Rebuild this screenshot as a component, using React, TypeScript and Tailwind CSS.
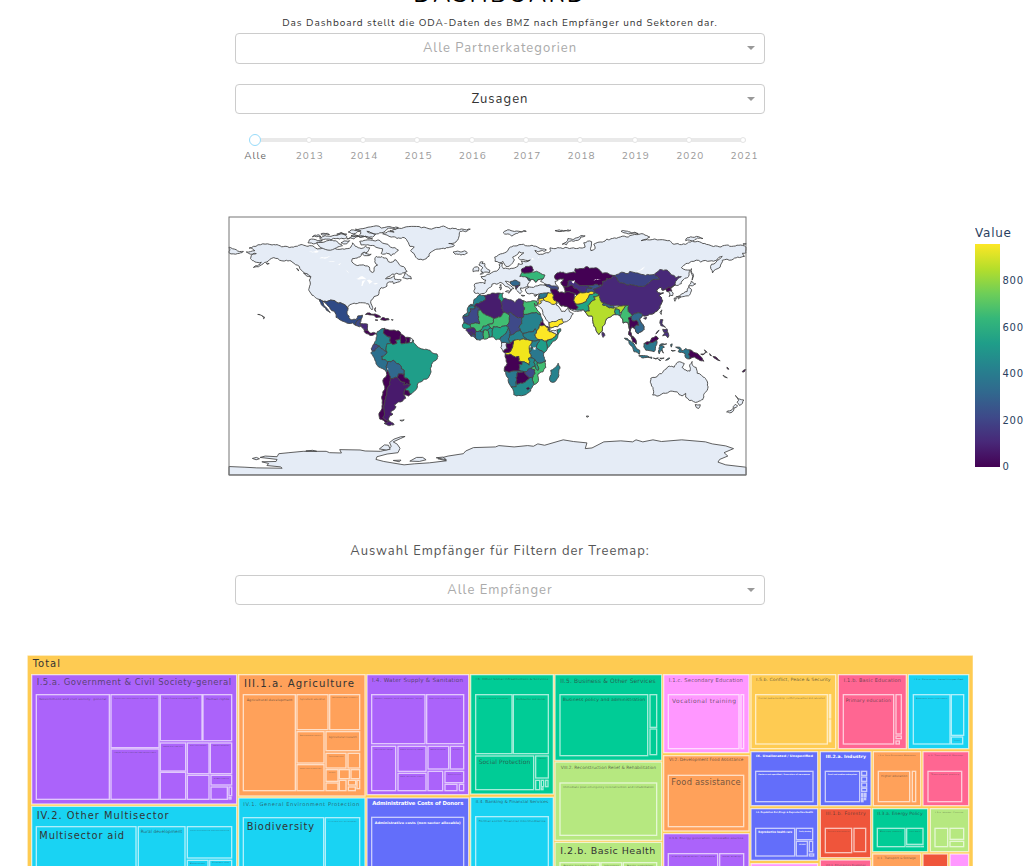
import React from "react";

type Shape = [fill: string, points: string];

const LAND = "#e5ecf6";

/* Outlines as "lon lat" pairs separated by commas. */
const BASE: string[] = [
  // North America
  "-168 65.6,-162 66.5,-166 68.3,-163 69.5,-156.5 71.3,-150 70.5,-141 69.6,-135 69,-128 70.3,-124 70,-115 68.5,-108 68,-101 67.8,-96 68.2,-94 72,-92 69.5,-88 68,-85 69.5,-82 68.5,-83 66.4,-87 65,-94 61,-94.5 58.8,-92.5 57,-88 56.5,-82.3 55.1,-82 53,-80 51.3,-79 52,-79 54.5,-76.5 56.5,-78.5 58.8,-77.5 62.5,-73.5 62.4,-70 61,-69 58.8,-66 58.7,-64.5 60.3,-61.5 56.8,-57.5 54.5,-56 52,-60 50.2,-66.4 50.2,-71 46.8,-65 49.2,-64.5 46.5,-60 46,-65.5 43.5,-66 45,-70 43.7,-70 41.8,-74 40.7,-75.5 38,-76 35.5,-81 32,-81.3 30,-80 27,-80.4 25.2,-82 27,-83 29.5,-85 30,-89.5 30.2,-94 29.5,-97.3 27.5,-97.2 25.9,-101 29.5,-106.5 31.7,-117.1 32.5,-120.6 34.6,-124.2 40.3,-124 46,-123 48.5,-127.5 51,-131 55.5,-136 58.5,-140 59.8,-146 61,-151.5 60.5,-154 58.5,-158.5 56,-163 54.8,-160 56,-157.5 58.5,-162 58.7,-165 61,-164.5 63.2,-161 64.5,-166.3 64.6",
  // Eurasia and Arabia
  "-9 43.2,-1.8 43.4,-1.2 46,-4.5 48.4,-1.6 48.7,1.5 50.2,4 51.8,8 53.8,8.1 57,10.6 57.7,10 55.5,11 54,14 54,19 54.5,21 55.5,21.5 57.5,24.4 57.2,23.5 59.2,29.8 60,23 60,21.4 61.5,25.3 65,22 65.8,17.5 62,18.8 60,16.5 57,14.2 55.4,12.8 55.6,10.8 59,8 58.1,5.3 59,5 62,10.5 64.5,15 68.3,19 69.8,25 71,31 70.3,41 67,40 66.2,33 66.7,35 64.3,37 64,40 64.8,44 66.5,43.5 68.5,46 68,54 68.8,60 68.5,68 69,67 72,72.5 72.8,72 66.5,75 68,74 71,80 72.5,87 75,98 76,104 77.7,113 76,107 73.5,113 74,127 73.5,130 71,140 72.5,150 71.5,160 69.7,170 69.5,180 69,180 65,177.5 64.7,179 62.5,170 60,163.5 59.8,163 57.8,162 55,156.7 51,156 57,161.5 60.5,163.5 62.5,155 59.3,142 59,135 54.7,141 53,140 48.5,135 43.5,130.7 42.5,127.5 39.8,129.3 37,129 35.2,126.4 34.5,126.8 37,124 39.9,121.5 39,121 40.8,117.8 39,119 37.2,122.5 37,119.5 35,121.9 31.8,120 26.5,116 22.8,110 21,108 21.6,105.8 19,109 13.4,109 11.6,105 8.7,102.5 12.3,100.5 13.4,99.3 10,103.4 4,103.5 1.3,100.5 5,98.3 8,98.8 12,97.5 16.5,94.4 16,94 19,91.5 22.5,87 21.5,82 16.6,80 13.5,79.8 10.3,77.5 8,73.5 16,72.7 21,70 21,68 23.7,66.5 25.4,57.3 25.8,56 27.1,51.5 27.9,50 30.1,48 29.9,48 28.5,50.2 26.6,51.2 25,51.6 24.1,54 24.1,56.3 26.3,57 24,59.8 22.5,57.7 19,55 17,52 15.6,45 12.8,43.4 12.6,42.8 16.4,39 21.5,35 28,34.9 29.5,34.3 31.2,36 35,36 36.7,32.5 36.1,30.5 36.7,27.5 36.8,26.3 39,27 40.4,29 41.2,35 42,41.5 41.5,39 44.2,37 45,39 47.2,35 46.3,33.5 44.5,32.5 46,30.5 46.5,28.7 44,27.8 42.6,28.5 41.2,26 40.8,23 40.5,24 38,22.8 36.5,21.5 37.5,19.4 41,19.5 42,13.7 45.1,12.4 45.2,13.6 43.6,18.4 40.1,16.8 39.8,15.8 38,16.2 39.5,12.5 41.5,10.2 43.9,8.8 44.4,6.5 43.1,3.1 43.1,3 41.8,-0.3 39.3,-0.7 37.8,-2.2 36.7,-5.6 36,-6.5 37,-8.9 37,-9.4 38.8,-8.8 41",
  // Greenland, Iceland, Great Britain, Ireland
  "-73 78.3,-67 76,-59 75.8,-55 72,-54 69.5,-51 69,-53.5 66.5,-50 62,-45 60,-42.5 61,-40 65,-32 68,-23 70.2,-27 71.5,-22 72.5,-20 76,-19 80,-12 81.5,-22 82,-32 83.4,-46 82.5,-60 82,-68 80.5,-65 79.5",
  "-24 65.5,-20 66,-16 66.4,-14 65,-18.5 63.5,-22.5 64",
  "-5 50,1.4 51.2,1.6 52.8,0 53.5,-2 55.8,-2 57.6,-4 57.7,-3 58.6,-5 58.6,-6 56.5,-3.2 54.5,-4.5 53.3,-4.5 52,-3 51.4",
  "-10 51.8,-6.3 52.2,-6 54.5,-8 55.2,-10 54",
  // Arctic Canada
  "-90 76.5,-80 76,-78 78,-84 80,-75 79,-70 81.5,-62 82.5,-70 83.1,-85 82.3,-92 81.5,-88 79",
  "-80 73.7,-72 71.5,-67.5 69,-62 66.8,-64 65,-67 63,-74 64.5,-73 67.8,-79 70,-88 70.5,-89 73,-85 73.8",
  "-117 69.2,-105 68.6,-101 70,-105 73,-113 72.8,-119 71.5", "-125 72,-120 71.4,-115 73.5,-121 74.5,-124 74.2",
  "-101 72.5,-96 73.5,-98 71.3,-102 72", "-105 75,-98 75.5,-98 76.5,-109 76.5,-117 75.4,-113 74.6", "-98 74.8,-93 74.7,-80 74.7,-82 75.7,-92 76.6,-96 75.4",
  "-122 76.2,-116 76,-117 77.4,-121 77", "-105 78,-98 78,-102 79.2", "-97 79.5,-92 78.5,-88 80.3,-95 81", "-86 65.7,-81 64,-84 63,-87 64", "-95 77,-90 77,-93 77.8", "-115 77.5,-110 77.7,-113 78.5,-116 78.2",
  "-59 47.7,-56 46.8,-53 46.8,-53.5 48.5,-56 49.8,-57.5 51.3", "-128 50.6,-123.5 48.3,-125 50", "-133 54,-131.5 52.3,-132 53.7", "-154 57.8,-152 57.5,-153.5 57",
  // Arctic Eurasia
  "11 79,20 80.2,27 80,20 78.5,17 76.7,13 78", "47 80.5,54 80.4,58 80.8,50 81", "52 71,55 70.6,57 73,68 76.8,64 76.3,56 75", "93 80,100 79,105 78.4,98 78.2,95 79", "138 73.5,143 73.3,150 75,144 75.8,139 75.5", "178 71,180 71,180 71.6,178 71.3",
  "-180 69,-175 67.2,-170 66,-174 64.5,-180 65", "142 54,143.5 49,142.5 46,141.8 51",
  // Japan, Taiwan
  "140 41.5,145 43.4,142 45.4", "140 41,142 39.5,140.8 35.7,137 34.6,133 34.3,131 34,136.5 36.8,139 38", "130 33.5,131.7 33,130.5 31.2", "132.5 34,134.5 34,133 32.8", "121.5 25.2,121 22,120.1 23.5",
  // Australia, Tasmania, New Zealand
  "113.7 -22.5,114 -26.5,115.7 -31.6,115 -34.2,118 -35,124 -33,129 -31.6,132 -32,135.5 -34.8,138 -33,138 -35.7,140.5 -38,143.5 -38.8,146.4 -39,150 -37.3,153 -31,153.3 -26,149 -20.5,146 -19,145.3 -15,143.6 -14.3,142.5 -10.8,141 -17.5,139 -17.5,135.5 -15,137 -12.2,132.5 -11.3,130 -14.8,126.5 -14,122.5 -17.5,119 -20",
  "144.7 -40.8,148.2 -41,147 -43.6,145.5 -43", "172.7 -34.5,175.5 -37,178.5 -37.7,175.5 -41.5,173.8 -39.2,174.8 -38", "172.7 -40.6,174.2 -41.8,170.5 -46,168.5 -46.6,166.5 -46",
  // Mediterranean islands, remote islands
  "12.5 38,15.5 38.2,15 36.8", "8.2 41,9.7 41,9 39", "23.5 35.5,26 35.2,24 34.9", "32.5 35.2,34.5 35.5,33 34.6", "8.6 42.6,9.5 42.8,9.3 41.5", "-157.5 21.4,-156 20.6,-155 19.8,-156 19,-156 20", "-160 22,-158 21.6,-159 21.9", "69 -48.8,70.5 -49,70 -49.6,69 -49.5", "-61 -51.8,-58 -51.5,-59 -52.2", "164 -20.3,167 -22.2,165.5 -21.8",
  // Gabon, Equatorial Guinea, Somaliland, French Guiana
  "9.3 -1,9.8 1,9.8 2.3,13.5 2,14 -2,11 -4", "43 10,43.2 11.4,44.8 10.5,49 11.4,49 8.5,47.9 8", "-54 5.8,-51.7 4.2,-52.7 2.2,-54.5 2.3",
];

const COUNTRIES: Shape[] = [
  ["#2f4a86", "-117.1 32.5,-106.5 31.7,-101 29.5,-97.2 25.9,-97.8 22.3,-95.9 18.9,-94.4 18.2,-91.5 18.5,-90.3 21,-87 21.5,-88 18.5,-91 17.5,-92 14.5,-94 16.1,-96.5 15.7,-101.7 17.7,-105.5 20,-105.4 21.8,-109.4 25.7,-112.8 30,-114.8 31.7,-111.5 26,-109.5 23.3,-112.2 25,-115 28"],
  ["#3e4a89", "-91 17.5,-88 18.5,-88.9 15.9,-88 14,-89 13.4,-92 14.5"],
  ["#482878", "-88.9 15.9,-83.5 15.2,-83.6 11,-85.8 11,-87.5 12.9,-88 14"],
  ["#440154", "-83.6 11,-82 9,-79.5 9.5,-77.4 8.5,-78.5 8.3,-80.3 7.4,-83 8.3,-85.8 10,-85.8 11"],
  ["#440154", "-85 22,-82 23.1,-77 21.8,-74.3 20.2,-77.7 19.9,-79 21.5"], ["#440154", "-74.4 18.4,-73 19.9,-69 19.2,-68.5 18.3,-71.5 17.8"], ["#440154", "-78 18.4,-76.3 18,-78 17.9"], [LAND, "-67 18.4,-65.7 18.3,-66 17.9"], ["#440154", "-78.5 25,-77.8 24,-78 26.8"],
  ["#26828e", "-77.4 8.5,-75 11,-71.7 12.3,-72.5 9,-67.5 6.2,-67.2 2,-69.8 1.7,-70 -4.2,-73 -2.3,-75.3 -0.1,-79 1.5"],
  ["#440154", "-71.7 12.3,-68 11,-62 10.7,-60 8,-60.7 5,-64 4,-63 2,-65.5 1,-67.2 2,-67.5 6.2,-72.5 9"],
  ["#440154", "-60 8,-57 6,-57 2,-60 1.5,-60.7 5"], ["#440154", "-57 6,-54 5.8,-54.5 2.3,-57 2"],
  ["#1f9e89", "-51.7 4.2,-50 1,-48 -1,-44 -2.5,-40 -3,-35.2 -5.5,-35 -9,-39 -13,-39.3 -18,-41 -22,-44.5 -23.2,-48.5 -26,-48.8 -28.6,-53.5 -33.7,-57.6 -30.2,-53.8 -27,-54.5 -24,-58 -22,-58 -19.8,-58 -17,-60 -16,-60.5 -13.7,-65.3 -10,-69.5 -11,-73.5 -9.5,-73.9 -7.3,-70 -4.2,-69.8 1.7,-67.2 2,-65.5 1,-63 2,-64 4,-60.7 5,-60 1.5,-57 2,-54.5 2.3,-52.7 2.2"],
  ["#3e4a89", "-79 1.5,-75.3 -0.1,-78.5 -3.5,-80.2 -3.6,-81 -2,-80 0"],
  ["#2c6f8e", "-80.2 -3.6,-78.5 -3.5,-75.3 -0.1,-73 -2.3,-70 -4.2,-73.9 -7.3,-73.5 -9.5,-69.5 -11,-69.5 -17.5,-70.4 -18.4,-76 -14.5,-79.5 -7.5,-81.3 -5"],
  ["#31688e", "-69.5 -11,-65.3 -10,-60.5 -13.7,-60 -16,-58 -17,-58 -19.8,-62 -19.5,-62.8 -22,-67.8 -22.8,-69.5 -17.5"],
  ["#440154", "-62.8 -22,-62 -19.5,-58 -19.8,-58 -22,-54.5 -24,-53.8 -27,-58.6 -27.2,-57.6 -25.4"],
  ["#481a6c", "-67.8 -22.8,-62.8 -22,-57.6 -25.4,-58.6 -27.2,-53.8 -27,-57.6 -30.2,-58.4 -34,-57 -36.5,-62 -39,-65 -41,-63.7 -42.5,-67.5 -46,-65.8 -47.5,-69 -51,-68.5 -52.3,-73 -50,-72 -46,-71.5 -39,-70 -30"],
  ["#440154", "-70.4 -18.4,-69.5 -17.5,-67.8 -22.8,-70 -30,-71.5 -39,-72 -46,-73 -50,-68.5 -52.3,-71 -53.8,-75 -51,-75.5 -46.8,-73.5 -42,-73.5 -37,-71.5 -30"],
  ["#440154", "-57.6 -30.2,-53.5 -33.7,-55 -34.9,-58.4 -34"], ["#481a6c", "-69 -52.6,-65 -54.8,-69 -55.5,-72 -54"],
  // Africa
  ["#26828e", "-2.2 35.2,-5.9 35.8,-9.3 32.6,-9.8 29.5,-13 27.8,-8.7 27.4,-8.7 28.8,-3.6 30.9,-1.3 32.3"],
  ["#26828e", "-13 27.8,-17 21,-13 21.3,-12.9 23.3,-12 23.5,-12 26,-8.7 26,-8.7 27.4"],
  ["#471c6d", "-2.2 35.2,3 36.9,8.4 36.9,7.5 34,9.5 30.3,9.9 26.5,12 23.5,5.8 19.5,4.3 19.1,1.8 20.6,-4.9 25,-8.7 27.4,-8.7 28.8,-3.6 30.9,-1.3 32.3"],
  ["#21a585", "8.4 36.9,11 37,10.3 34.2,11.4 33.1,9.5 30.3,7.5 34"],
  ["#472f7d", "11.4 33.1,15.3 32.3,19 30.3,21.5 32.9,25 31.6,25 22,25 20,23.8 19.6,15.9 23.4,14 22.5,12 23.5,9.9 26.5,9.5 30.3"],
  ["#40bd72", "25 31.6,29 30.9,31 31.5,34.3 31.2,34.9 29.5,34 27.8,32.6 29.9,34 26.5,35.5 24,37 22,25 22"],
  ["#3e4a89", "-17 21,-13 21.3,-12.9 23.3,-12 23.5,-12 26,-8.7 26,-8.7 27.4,-4.9 25,-6.5 25,-5.5 15.5,-11.5 15.5,-12.2 14.6,-16.5 16.1"],
  ["#40bd72", "-4.9 25,1.8 20.6,4.3 19.1,4.2 16.9,3.6 15.5,0.4 15,-3 13.8,-5.5 10.4,-8 10.2,-9 12.3,-11.4 12.4,-12.2 14.6,-11.5 15.5,-5.5 15.5,-6.5 25"],
  ["#40bd72", "4.3 19.1,5.8 19.5,12 23.5,14 22.5,15.5 21,15.2 16.6,13.5 14.4,13.9 13.6,9 12.8,4.1 13.5,3.6 11.7,2.2 12.6,0.4 15,3.6 15.5,4.2 16.9"],
  ["#3e4a89", "14 22.5,15.9 23.4,23.8 19.6,24 15.7,22 13,22.9 11,19 9,15.3 7.4,15.5 10,14.5 12.5,13.5 14.4,15.2 16.6,15.5 21"],
  ["#26828e", "25 22,37 22,38.5 18,37 17,36.4 14.5,34.2 10.5,33 12,32 10,28 9.5,24.5 8.8,22.9 11,22 13,24 15.7,23.8 19.6,25 20"],
  ["#26828e", "24.5 8.8,28 9.5,32 10,33 12,34.2 10.5,33 7.8,36 4.4,31 3.8,28 4.4"],
  ["#440154", "38.5 18,36.4 14.5,40 14.5,42.4 12.5,43 12.8,39.8 15"], ["#3e4a89", "42.4 12.5,43 12.8,43.2 11.4,42 11"],
  ["#1f9e89", "49 11.4,51 12,51 10.5,48 4.5,44 1,41.6 -1.7,41 2.8,42 4.2,45 5,47.9 8,49 8.5"],
  ["#fde725", "36.4 14.5,40 14.5,42.4 12.5,42 11,43 10,47.9 8,45 5,42 4.2,39.5 3.4,36 4.4,33 7.8,34.2 10.5"],
  ["#1f9e89", "36 4.4,39.5 3.4,42 4.2,41 2.8,41.6 -1.7,39.2 -4.7,34 -1,35 2"], ["#26828e", "31 3.8,36 4.4,35 2,34 -1,30.8 -1.2,30 1"],
  ["#2a788e", "30.8 -1.2,34 -1,39.2 -4.7,39 -7,40.4 -10.4,34.5 -11.5,32.8 -9.3,30.5 -8.3,29.2 -4.4,30.5 -2.5"], ["#1f9e89", "29 -1.5,30.8 -1.2,30.5 -2.5,29.2 -4.4"],
  ["#26828e", "15.3 7.4,19 9,22.9 11,24.5 8.8,28 4.4,25 5,22.5 4.1,18.5 4,16 2,14.5 5"],
  ["#f1e51c", "18.5 4,22.5 4.1,25 5,28 4.4,31 3.8,30 1,29 -1.5,29.2 -4.4,30.5 -8.3,28.5 -8.6,29 -13.4,27 -11.8,24 -11,22 -11,21.8 -7.3,17.5 -7,16.5 -5.9,12.3 -6,13 -4.6,16 -3.8,17.5 -0.7,18 2"],
  ["#440154", "12 -5,13 -4.6,16 -3.8,17.5 -0.7,18 2,18.5 4,16 2,13.5 2,14 -2,11 -4"],
  ["#2a788e", "8.5 4.7,9.8 2.3,13.5 2,16 2,14.5 5,15.3 7.4,15.5 10,14.5 12.5,13 9,10.5 7"],
  ["#21a585", "2.7 6.3,2.8 9,3.6 11.7,4.1 13.5,9 12.8,13.9 13.6,14.5 12.5,13 9,10.5 7,8.5 4.7,6 4.3,4.3 6.3"],
  ["#1f9e89", "1 6,0 11,2.2 12.6,3.6 11.7,2.7 6.3"], ["#40bd72", "-3 5.1,-2.8 9.6,-2.9 11,0 11,1 6,-2 4.7"],
  ["#1f9e89", "-5.5 10.4,-3 13.8,0.4 15,2.2 12.6,0 11,-2.9 11,-2.8 9.6"], ["#2a788e", "-7.5 4.4,-8.4 7.5,-8 10.2,-5.5 10.4,-2.8 9.6,-3 5.1"],
  ["#482878", "-15 11,-13.7 12.6,-11.4 12.4,-9 12.3,-8 10.2,-8.4 7.5,-10.3 8.5,-13.2 9"], ["#3e4a89", "-11.4 6.8,-7.5 4.4,-8.4 7.5,-10.3 8.5"], ["#482878", "-13.2 9,-11.4 6.8,-10.3 8.5,-11 10"],
  ["#1f9e89", "-17.5 14.7,-16.5 16.1,-12.2 14.6,-11.4 12.4,-16.7 12.4"],
  ["#440154", "12.3 -6,16.5 -5.9,17.5 -7,21.8 -7.3,22 -11,24 -11,24 -13,22 -13,22 -16.2,23.2 -17.5,18.4 -17.4,11.7 -17.3,13.7 -12,13 -9"],
  ["#238a8d", "22 -13,24 -13,24 -11,27 -11.8,29 -13.4,28.5 -8.6,30.5 -8.3,32.8 -9.3,33.2 -14,30.2 -15.6,27 -17.9,23.2 -17.5,22 -16.2"],
  ["#40bd72", "34.5 -11.5,40.4 -10.4,40.7 -15,35 -19.8,35.5 -24,32.8 -26.8,32 -26,31.3 -22.3,33 -19,32.9 -16.7,30.2 -15.6,33.2 -14,35 -17,35.7 -16,34.5 -13"],
  ["#21a585", "32.8 -9.3,34.5 -11.5,34.5 -13,35.7 -16,35 -17,33.2 -14"], ["#3e4a89", "25.2 -17.8,27 -17.9,30.2 -15.6,32.9 -16.7,33 -19,31.3 -22.3,29.4 -22.1,26 -19"],
  ["#2a788e", "11.7 -17.3,18.4 -17.4,23.2 -17.5,25.2 -17.8,21 -18.3,20 -22,20 -28.4,16.5 -28.6,14.5 -22.5"], ["#440154", "20 -22,21 -18.3,25.2 -17.8,26 -19,29.4 -22.1,25.5 -25.5,20.7 -26.8,20 -24.8"],
  ["#238a8d", "16.5 -28.6,20 -28.4,20 -24.8,20.7 -26.8,25.5 -25.5,29.4 -22.1,31.3 -22.3,32 -26,32.8 -26.8,30 -31.5,27 -33.8,20 -34.8,18.3 -34,18.2 -31.7"],
  ["#440154", "27 -29.6,28.5 -28.8,29.3 -29.6,28 -30.6"], ["#26828e", "49.2 -12,50.5 -15.5,47 -25,44 -25,43.3 -22,44.3 -20,44 -17,46.5 -15.5"],
  // Europe
  ["#440154", "23.5 53,26.5 55.5,31 55.5,32 53,30.5 51.3,24 51.5"], ["#35b779", "22.5 48.5,24 51.5,30.5 51.3,34 52.2,40 49.5,39 47.2,35 46.3,33.5 44.5,32.5 46,30.5 46.5,29 45.5,27 48"],
  ["#31688e", "16 45,19 46,22.5 44.5,22.5 42.3,20.5 42,20 40,19.5 42,16 43.5"], ["#482878", "19.5 42,20.5 42,22.5 42.3,21 40.8,20 40"], ["#31688e", "27 48,29 45.5,30 46.5"],
  // Asia
  ["#3e4a89", "40 43.3,46.5 41.9,49.5 40.5,48.9 38.4,46 39,44 40,41.5 41.5"],
  ["#440154", "47 47,49 46,50.5 46.8,53 46.8,51 44.5,52.5 42,56 41.3,56 45,58.5 45.6,61 44.3,66 42,70 42,75 43,80 42.3,80 45,82.5 45.5,83 47,85.5 47,87.8 49.2,83.5 51,80 50.8,77 54,71 54.2,69 55.4,61 54,61.5 51,55 50.6,50.5 51.7,47 49.5"],
  ["#46307e", "56 41.3,56 45,58.5 45.6,61 44.3,66 42,70 42,73 40.5,69 40.2,68 37.2,62 40,58.5 42.5"],
  ["#440154", "52.5 42,53.9 39,53.8 37,56 38,61 36.5,62 35.3,64.5 37.2,68 37.2,62 40,58.5 42.5,56 41.3"],
  ["#3b528b", "70 42,75 43,80 42.3,73.8 39.5,75 37.2,71.5 38,68 37.2,69 40.2,73 40.5"],
  ["#440154", "44 39.7,48 39.5,48.9 38.4,50 37.5,53.8 37,56 38,61 36.5,60.5 33.5,61 29.8,63.3 27,61.5 25.2,57.3 25.8,56 27.1,51.5 27.9,50 30.1,48 30.8,45.5 33.8,46 35.5,44.8 37.2"],
  ["#fde725", "38.8 33.4,41 34.5,42.3 37.2,44.8 37.2,46 35.5,45.5 33.8,48 30.8,48 29.9,46.5 29,44.7 29.2,39.2 32.1"],
  ["#2a788e", "35.8 35.5,36.7 36.6,42.3 37.2,41 34.5,38.8 33.4,36 32.7"], ["#fde725", "35 29.4,35.6 32.7,38.8 33.4,39.2 32.1,37 31.5,37.5 30,36 29.2"], ["#f1e51c", "35.2 33,36.5 34.5,35.9 34.6"],
  ["#fde725", "42.8 16.4,47 17,52 19,53 16.6,52 15.6,45 12.8,43.4 12.6"],
  ["#482878", "73.8 39.5,80 42.3,80 45,82.5 45.5,83 47,85.5 47,87.8 49.2,91 45.2,97 42.7,105 41.6,112 43.7,116 46.5,119.8 47,116 49.8,120 53.3,125 53,127.5 50,131 47.7,135 48.4,131 45,130.7 42.5,126 41,124 39.9,121.5 39,121 40.8,117.8 39,119 37.2,122.5 37,119.5 35,121.9 31.8,120 26.5,116 22.8,110 21,108 21.6,106 23,102 22.5,101 21.3,98 24,98.5 28,97 28.3,92 27.9,88 28,81 30,79 31,77.8 35.5,75 37.2"],
  ["#3b4284", "87.8 49.2,92 50.8,98 50.5,99 52,102 51.3,107 50,113 49.6,116 49.8,119.8 47,116 46.5,112 43.7,105 41.6,97 42.7,91 45.2"],
  ["#21a585", "61.5 25.2,66.5 25.4,68 23.7,71 24.4,70 28,75 32.3,74 34.5,77.8 35.5,75 37.2,71 36,70 33.5,66.3 30,61 29.8,63.3 27"],
  ["#fde725", "60.5 33.5,62 35.3,64.5 37.2,68 37.2,71.5 38,75 37.2,71 36,70 33.5,66.3 30,61 29.8"],
  ["#b5de2b", "68 23.7,71 24.4,70 28,75 32.3,74 34.5,77.8 35.5,79 31,81 30,80 28.8,88 26.5,89 27,92 27.9,97 28.3,95 26,93.5 24,92.3 23,92 25,89 26,88.5 24,89 21.8,87 21.5,82 16.6,80 13.5,79.8 10.3,77.5 8,73.5 16,72.7 21,70 21"],
  ["#31688e", "80 28.8,81 30,88 28,88 26.5"], ["#1f9e89", "89 26,92 25,92.3 23,92.3 21,89 21.8,88.5 24"], ["#482878", "80 9.7,81.8 7.5,80.5 6,79.8 7.5"],
  ["#40bd72", "92.3 21,93.5 24,95 26,97 28.3,98.5 28,98 24,101 21.3,98 19.5,98.7 16.5,98.8 12,97.5 16.5,94.4 16,94 19"],
  ["#440154", "98 19.5,100 20.3,101 17.6,104 18,105.5 14.5,102.5 13.5,102.5 12.3,100.5 13.4,99.3 10,102 6,100.2 6.3,98.3 8,98.8 12,98.7 16.5"],
  ["#31688e", "100 20.3,101 21.3,102 22.5,106 23,108 21.6,105.8 19,109 13.4,109 11.6,105 8.7,102.5 12.3,102.5 13.5,105.5 14.5,104 18,101 17.6"],
  ["#440154", "100.2 6.3,102 6,103.4 4,103.5 1.3,101 3"], ["#440154", "124 39.9,126 41,130.7 42.5,127.5 39.8,128.4 38.6,125 37.8"], ["#482878", "108.7 19.3,110.8 20,110.3 18.6"],
  ["#2a788e", "95.3 5.5,97.5 5.2,104 -2,106 -3,105.8 -5.8,102 -4,98.6 1.8"], ["#2a788e", "105.3 -6.8,108.6 -6.7,114.5 -7.8,114.4 -8.7,106.5 -7.4"],
  ["#2a788e", "109 2,111 1,115 2.5,117.8 4.1,117.8 1,116 -4,110.2 -2.9"], ["#440154", "109.7 2,113 3,117 7,119 5,117.8 4.1,115 2.5,111 1"],
  ["#2a788e", "119 -3.5,119.8 0.7,124.8 1.5,120.5 0.4,123.2 -0.8,121.5 -2,122.5 -5,120.8 -3,119.6 -5.5"], ["#2a788e", "115.5 -8.4,119 -8.4,117 -9"], ["#2a788e", "120 -8.5,123 -8.4,121 -9"], ["#2a788e", "124 -10,127 -8.4,125 -9.2"], ["#2a788e", "127.5 1,128.6 1.5,128 -0.8"], ["#2a788e", "127.8 -3,130.8 -3.2,129 -3.6"], ["#2a788e", "119 -9.4,120.7 -10.2,119.5 -9.9"],
  ["#2a788e", "131 -0.8,134 -0.9,135 -3.3,138 -1.8,141 -2.7,141 -9,138 -8.2,137.7 -5.5,132.8 -4,133.8 -2.3"], ["#440154", "141 -2.7,145.8 -5,147.5 -6.5,150.7 -10.6,147 -9.5,144 -7.7,141 -9"],
  ["#440154", "148.5 -5.7,152 -4.3,150 -6.2"], ["#440154", "151 -2.7,153 -4.5,152 -3.5"], ["#440154", "154.7 -5.3,156 -6.8,155 -6.5"], ["#440154", "157 -7.3,160 -8.5,162 -10.3,159 -9"], ["#440154", "166.7 -14.8,168 -16.3,167 -16"], ["#440154", "177.3 -18,179.9 -16.3,178.5 -18.2"],
  ["#482f7d", "120.5 18.5,122.2 18.3,121.5 15.5,124 13,120.7 14.2,120 16"], ["#482f7d", "122 11.7,125 12,125.4 10.2,123 9.3"], ["#482f7d", "122 7,125.5 9.7,126.3 7,125.5 5.7,124 7.4"], ["#482f7d", "117.2 8.4,119.5 11.2,118 9"],
];

const LAKES = [
  "47 45,50.5 46.8,53 46.8,51 44.5,52.5 42,53.9 39,53.8 37,50 37.5,48.9 38.4,49.5 40.5,47.5 43",
  "31.8 -0.8,34 -0.5,33.5 -2.6,32 -2.4", "-92 46.8,-88 48.7,-84.5 46.6,-88 46.7", "-88 42,-87 45.5,-85 45.8,-86.5 43.5,-87 41.8", "-84 45.8,-80 45.2,-82.3 43.2", "-83 41.5,-79 42.8,-81 42", "-79.6 43.4,-76.3 44,-77 43.3",
  "-124.5 66,-119 66.8,-117.5 65.8,-122 65.2", "-117 61,-109 62.8,-112 61.2", "-99 53.5,-96.5 50.5,-97.7 52", "-111 59.2,-106 59.3,-109 58.8", "103.8 51.6,108 53.4,109.8 55.6,106 53", "73.8 45.5,79 46.6,75 46.6", "58.5 45,61 46,60 43.6", "35 61,36 61.6,35.7 62.5", "30.8 60.2,32.8 60.6,31 61.5", "-70 -15.3,-69 -16,-69.5 -16.5", "-104 57,-102 58,-103 56.4",
];

const ANTARCTICA =
  "13,201 60,203 95,205 170,206 165,202 125,198 130,192 110,187 152,186 155,180 105,174 120,170 155,172 160,163 190,160 232,156 300,156 310,160 345,161 340,151 400,152 415,155 460,156 485,150 492,141 487,130 500,120 520,113 533,112 520,118 498,128 510,135 518,147 512,160 480,164 450,172 447,180 470,186 530,196 560,193 605,190 655,184 630,178 660,170 705,163 712,155 735,145 800,143 810,139 855,143 895,139 912,141 925,134 945,138 1000,122 1030,127 1070,131 1065,148 1085,146 1120,128 1170,125 1205,128 1215,122 1235,128 1265,122 1290,127 1350,122 1420,128 1440,134 1480,140 1503,148 1475,160 1486,170 1462,180 1457,188 1480,196 1540,203 1540,226 13,226";

type Pt = [number, number];

/* Midpoint displacement keyed on both endpoints, so shared borders stay shared. */
function refine(a: Pt, b: Pt, depth: number): Pt[] {
  const len = Math.hypot(a[0] - b[0], a[1] - b[1]);
  if (depth === 0 || len < 1.8 || len > 16) return [a];
  const forward = a[0] < b[0] || (a[0] === b[0] && a[1] < b[1]);
  const [p, q] = forward ? [a, b] : [b, a];
  const h = Math.sin(p[0] * 12.9 + p[1] * 78.2 + q[0] * 37.7 + q[1] * 11.3) * 43758.5;
  const k = (h - Math.floor(h) - 0.5) * 0.34;
  const m: Pt = [(p[0] + q[0]) / 2 - (q[1] - p[1]) * k, (p[1] + q[1]) / 2 + (q[0] - p[0]) * k];
  return [...refine(a, m, depth - 1), ...refine(m, b, depth - 1)];
}

function outline(s: string): string {
  const pts = s.split(",").map((t) => t.trim().split(" ").map(Number) as Pt);
  return pts.flatMap((p, i) => refine(p, pts[(i + 1) % pts.length], 3)).map((p) => `${p[0].toFixed(2)},${p[1].toFixed(2)}`).join(" ");
}

function WorldMap() {
  return (
    <svg width="519" height="260" viewBox="-180.7 -90.7 361.4 181.4" preserveAspectRatio="none" className="block">
      <g transform="scale(1,-1)" stroke="#444" strokeWidth="0.62" strokeLinejoin="round">
        {BASE.map((s, i) => <polygon key={i} points={outline(s)} fill={LAND} />)}
        {COUNTRIES.map(([c, s], i) => <polygon key={i} points={outline(s)} fill={c} />)}
        {LAKES.map((s, i) => <polygon key={i} points={outline(s)} fill="#fff" stroke={i === 0 ? "#444" : "none"} />)}
      </g>
      <g transform="translate(-183.07 36.7) scale(.2358)" fill={LAND} stroke="#444" strokeWidth="2.5" strokeLinejoin="round">
        <polygon points={ANTARCTICA} />
        <path d="M82 177l12-3 9 4-10 3zM547 185l20-11 18 0 10 7-20 5zM457 149l15-12 12 1 5 12-12 2zM498 183l23-1-5 5zM625 175l20-2 10 8zM240 155l20-2 12 3z" />
      </g>
      <rect x="-180" y="-90" width="360" height="180" fill="none" stroke="#777" strokeWidth="0.7" />
    </svg>
  );
}

type Label = [text: string, x: number, y: number, size: number, width: number];
type Sector = { dx?: number; fill: string; box: number[]; cells: number[][]; labels?: Label[]; light?: boolean };

/* Treemap geometry: three units per pixel, boxes as x1, y1, x2, y2. */
const SECTORS: Sector[] = [
  { fill: "#ab63fa", box: [35, 74, 650, 462], cells: [[49, 134, 268, 448], [273, 134, 417, 293], [273, 297, 417, 448], [421, 134, 546, 272], [549, 134, 635, 272], [421, 279, 497, 363], [502, 279, 567, 371], [571, 279, 635, 371], [421, 367, 497, 448], [502, 376, 567, 448], [573, 376, 635, 405], [573, 411, 622, 448], [627, 411, 635, 437], [627, 442, 633, 447]], labels: [["I.5.a. Government & Civil Society-general", 50, 105, 25.5, 583], ["Government and civil society, general", 58, 150, 8, 201], ["Democratic participation and civil society", 282, 148, 5, 127], ["Public finance management (PFM)", 429, 148, 6, 107], ["Human rights", 558, 150, 8, 70], ["Legal and judicial development", 282, 309, 4, 127], ["Media and free flow", 429, 291, 4, 60], ["Anti-corruption", 510, 289, 4, 49], ["Decentralisation", 579, 289, 4, 49], ["Elections", 581, 388, 4, 46]] },
  { fill: "#19d3f3", box: [35, 469, 650, 760], cells: [[49, 530, 348, 740], [355, 530, 495, 740], [502, 530, 635, 624], [502, 631, 564, 740], [569, 631, 635, 740]], labels: [["IV.2. Other Multisector", 50, 506, 29.5, 396], ["Multisector aid", 58, 566, 29.5, 254], ["Rural development", 362, 550, 13, 125], ["Urban development and management", 510, 543, 5, 118], ["Education", 510, 641, 5, 46], ["Disaster risk", 577, 639, 5, 50]] },
  { fill: "#ffa15a", box: [656, 74, 1035, 438], cells: [[670, 134, 826, 422], [831, 134, 924, 239], [929, 134, 1019, 239], [831, 245, 912, 339], [918, 245, 1019, 302], [831, 344, 912, 422], [918, 310, 978, 354], [984, 310, 1019, 354], [918, 359, 954, 394], [958, 359, 988, 386], [993, 359, 1019, 386], [918, 399, 954, 422], [958, 391, 978, 422], [985, 391, 1007, 405], [1011, 391, 1019, 416], [985, 411, 1006, 422]], labels: [["III.1.a. Agriculture", 672, 110, 30.5, 330], ["Agricultural development", 680, 153, 10, 137], ["Agricultural education", 839, 149, 7, 76], ["Agricultural water resources", 937, 144, 5, 75], ["Agricultural policy", 839, 258, 5, 65], ["Agricultural research", 926, 263, 8, 85], ["Food crop production", 839, 356, 4, 65], ["Plant protection", 926, 321, 5, 45], ["Livestock", 926, 368, 5, 20]] },
  { fill: "#19d3f3", box: [656, 444, 1035, 760], cells: [[670, 503, 911, 740], [916, 503, 1019, 740]], labels: [["IV.1. General Environment Protection", 670, 467, 15.5, 348], ["Biodiversity", 680, 540, 29.5, 202], ["Environmental policy and management", 924, 515, 4, 87]] },
  { dx: 1020, fill: "#ab63fa", box: [21, 74, 326, 434], cells: [[35, 134, 195, 281], [200, 134, 311, 281], [35, 289, 107, 422], [114, 289, 198, 364], [204, 289, 266, 357], [271, 289, 311, 357], [114, 370, 198, 422], [204, 364, 248, 422], [255, 364, 311, 398], [255, 403, 291, 422], [298, 403, 311, 422]], labels: [["I.4. Water Supply & Sanitation", 36, 96, 17, 273], ["Water supply and sanitation, large", 43, 147, 5, 145], ["Water sector policy and management", 208, 148, 5, 95], ["Sanitation large", 43, 299, 4, 55], ["Basic drinking water", 121, 299, 4, 70], ["Waste disposal", 211, 299, 4, 46], ["River basins", 278, 299, 4, 25], ["Basic sanitation supply", 121, 381, 4, 70], ["Education and training", 263, 375, 5, 40]] },
  { dx: 1020, fill: "#00cc96", box: [332, 74, 580, 432], cells: [[347, 134, 456, 311], [460, 134, 565, 311], [347, 318, 521, 419], [527, 318, 565, 384], [527, 391, 539, 419], [544, 391, 551, 410], [557, 391, 564, 410], [544, 414, 549, 419]], labels: [["I.6. Other Social Infrastructure & Services", 347, 89, 8, 218], ["Employment creation", 356, 147, 5, 90], ["Multisector aid social", 468, 150, 7, 88], ["Social Protection", 356, 342, 18, 155], ["Housing", 535, 327, 6, 22]] },
  { dx: 1020, light: true, fill: "#636efa", box: [21, 444, 326, 760], cells: [[35, 502, 311, 740]], labels: [["Administrative Costs of Donors", 37, 465, 16, 273], ["Administrative costs (non-sector allocable)", 44, 522, 10, 258]] },
  { dx: 1020, fill: "#19d3f3", box: [332, 442, 580, 760], cells: [[347, 500, 565, 740]], labels: [["II.4. Banking & Financial Services", 347, 459, 12, 218], ["Formal sector financial intermediaries", 356, 515, 8, 201]] },
  { dx: 1020, fill: "#00cc96", box: [585, 74, 905, 331], cells: [[600, 134, 863, 317], [870, 134, 890, 232], [870, 237, 890, 314]], labels: [["II.5. Business & Other Services", 601, 100, 18, 286], ["Business policy and administration", 608, 153, 13, 248]] },
  { dx: 1020, fill: "#b6e880", box: [585, 336, 905, 571], cells: [[600, 399, 890, 556]], labels: [["VIII.2. Reconstruction Relief & Rehabilitation", 602, 358, 13, 286], ["Immediate post-emergency reconstruction and rehabilitation", 609, 414, 8, 273]] },
  { dx: 1020, fill: "#b6e880", box: [585, 577, 905, 760], cells: [[600, 638, 719, 740], [723, 638, 785, 740], [790, 638, 890, 740]], labels: [["I.2.b. Basic Health", 601, 611, 28.5, 285], ["Basic health care", 610, 648, 5, 100], ["Infectious", 732, 648, 5, 45], ["Basic nutrition", 800, 648, 5, 80]] },
  { dx: 1920, fill: "#ff97ff", box: [11, 74, 267, 308], cells: [[25, 134, 237, 296], [243, 134, 251, 296]], labels: [["I.1.c. Secondary Education", 26, 96, 16, 223], ["Vocational training", 36, 158, 18, 192]] },
  { dx: 1920, fill: "#ffa15a", box: [11, 317, 267, 543], cells: [[25, 376, 251, 530]], labels: [["VI.2. Development Food Assistance", 27, 333, 13, 223], ["Food assistance", 34, 405, 25, 208]] },
  { dx: 1920, fill: "#ab63fa", box: [11, 551, 267, 760], cells: [[25, 611, 173, 740], [179, 611, 251, 740]], labels: [["II.3.b. Energy generation, renewable sources", 27, 566, 8, 223], ["Energy generation, renewable", 35, 620, 4, 130], ["Solar energy", 187, 620, 4, 58]] },
  { dx: 1920, fill: "#fecb52", box: [273, 74, 527, 296], cells: [[287, 134, 502, 282], [508, 134, 512, 204], [508, 210, 512, 275]], labels: [["I.5.b. Conflict, Peace & Security", 288, 94, 13, 224], ["Civilian peace-building, conflict prevention and resolution", 295, 147, 7, 200]] },
  { dx: 1920, fill: "#ff6692", box: [535, 74, 739, 296], cells: [[550, 134, 701, 282], [708, 134, 724, 252], [708, 258, 724, 266], [708, 273, 718, 282]], labels: [["I.1.b. Basic Education", 551, 95, 15, 172], ["Primary education", 557, 157, 14, 136]] },
  { dx: 1920, fill: "#19d3f3", box: [745, 74, 926, 296], cells: [[760, 134, 870, 282], [874, 134, 911, 256], [874, 261, 908, 282]], labels: [["I.1.a. Education, Level Unspecified", 762, 90, 6, 148], ["Education policy and admin", 768, 148, 5, 95], ["Research", 883, 273, 5, 18]] },
  { dx: 1920, light: true, fill: "#636efa", box: [273, 305, 473, 467], cells: [[287, 364, 459, 455]], labels: [["IX. Unallocated / Unspecified", 288, 321, 9, 171], ["Sectors not specified / Promotion of awareness", 295, 375, 5, 155]] },
  { dx: 1920, light: true, fill: "#636efa", box: [481, 305, 633, 467], cells: [[496, 364, 599, 455], [605, 364, 620, 376], [605, 381, 620, 394], [605, 399, 620, 411], [605, 415, 620, 424], [605, 430, 609, 441], [614, 430, 618, 441], [605, 446, 609, 455], [614, 446, 617, 449]], labels: [["III.2.a. Industry", 497, 325, 13, 121], ["Small and medium enterprises", 503, 375, 5, 88]] },
  { dx: 1920, fill: "#ffa15a", box: [640, 305, 782, 467], cells: [[655, 364, 749, 455], [757, 364, 767, 455]], labels: [["I.1.d. Post-Secondary Education", 655, 318, 5, 112], ["Higher education", 663, 380, 9, 79]] },
  { dx: 1920, fill: "#ff6692", box: [789, 305, 926, 467], cells: [[804, 364, 905, 455]], labels: [["II.1. Transport & Storage", 804, 318, 5, 106], ["Transport policy", 812, 374, 5, 86]] },
  { dx: 1920, light: true, fill: "#636efa", box: [273, 476, 473, 631], cells: [[287, 535, 404, 618], [409, 535, 458, 569], [409, 574, 442, 618], [448, 574, 458, 605], [448, 612, 461, 618]], labels: [["I.3. Population Pol./Progr. & Reproductive Health", 288, 490, 7, 171], ["Reproductive health care", 295, 550, 9, 101], ["Family planning", 417, 545, 5, 36], ["HIV/AIDS", 417, 584, 5, 20]] },
  { dx: 1920, fill: "#ef553b", box: [481, 476, 632, 623], cells: [[496, 535, 575, 608], [582, 535, 617, 605]], labels: [["III.1.b. Forestry", 497, 496, 14, 120], ["Forestry development", 503, 545, 5, 65]] },
  { dx: 1920, fill: "#00cc96", box: [638, 476, 803, 605], cells: [[652, 535, 735, 590], [740, 535, 789, 583], [740, 589, 780, 590], [784, 589, 790, 590]], labels: [["II.3.a. Energy Policy", 652, 496, 13, 136], ["Energy policy", 660, 545, 5, 66], ["Energy research", 748, 545, 4, 34]] },
  { dx: 1920, fill: "#b6e880", box: [811, 476, 926, 605], cells: [[825, 535, 863, 590], [870, 535, 911, 568], [870, 574, 911, 590]], labels: [["I.2.a. Health, General", 825, 489, 5, 85]] },
  { dx: 1920, fill: "#ff97ff", box: [273, 641, 473, 760], cells: [] },
  { dx: 1920, fill: "#ff6692", box: [481, 630, 632, 760], cells: [], labels: [["VIII.1. Emergency Response", 497, 647, 8, 120]] },
  { dx: 1920, fill: "#ffa15a", box: [638, 612, 782, 760], cells: [], labels: [["II.1. Transport & Storage", 652, 627, 9, 115]] },
  { dx: 1920, fill: "#ef553b", box: [789, 612, 863, 760], cells: [] },
  { dx: 1920, fill: "#ff97ff", box: [870, 612, 926, 760], cells: [] },
];

function labelOpacity(s: Sector, size: number): number {
  if (s.light) return 1;
  if (size > 26) return 1;
  return size < 10 ? 0.6 : 0.7;
}

function Treemap() {
  return (
    <svg width="960" height="216" viewBox="0 0 2880 648" className="ml-5 block" fontFamily="'DejaVu Sans', Verdana, sans-serif">
      <rect x="22" y="16" width="2837" height="700" fill="#fecb52" stroke="#fff" strokeOpacity="0.5" strokeWidth="3" />
      <text x="38" y="51" fontSize="30" fill="#333" textLength="82">Total</text>
      {SECTORS.map((s, i) => (
        <g key={i} transform={`translate(${s.dx ?? 0} 0)`} stroke="#fff">
          <rect x={s.box[0]} y={s.box[1]} width={s.box[2] - s.box[0]} height={s.box[3] - s.box[1]} fill={s.fill} strokeWidth="4" strokeOpacity="0.65" />
          {s.cells.map((c, j) => (
            <rect key={j} x={c[0]} y={c[1]} width={c[2] - c[0]} height={c[3] - c[1]} fill={s.fill} strokeWidth="4" strokeOpacity="0.65" />
          ))}
          {s.labels?.map(([t, x, y, size, w]) => (
            <text key={t} x={x} y={y} fontSize={size} textLength={w} lengthAdjust={size < 14 ? "spacingAndGlyphs" : "spacing"} stroke="none" fill={s.light ? "#fff" : "#333"} fillOpacity={labelOpacity(s, size)} fontWeight={s.light ? 700 : 400}>
              {t}
            </text>
          ))}
        </g>
      ))}
    </svg>
  );
}

function Dropdown({ children, muted = false, className }: { children: React.ReactNode; muted?: boolean; className: string }) {
  return (
    <div className={`relative mx-auto flex w-[530px] justify-center rounded border border-[#ccc] text-[13px] leading-[29px] tracking-[1px] ${muted ? "text-[#aaa]" : "text-[#333]"} ${className}`}>
      <span>{children}</span>
      <span className="absolute right-[9px] top-3 border-x-[4.5px] border-t-[4.5px] border-x-transparent border-t-[#999]" />
    </div>
  );
}

const MARKS = ["Alle", "2013", "2014", "2015", "2016", "2017", "2018", "2019", "2020", "2021"];

function YearSlider() {
  return (
    <div className="mx-auto mt-[20px] h-[30px] w-[543px]">
      <div className="relative flex h-3 items-center justify-between pl-[20px] pr-[22px]">
        <div className="absolute inset-x-[26px] top-1 h-1 rounded bg-[#e9e9e9]" />
        {MARKS.map((m, i) => (
          <span key={m} className="relative flex w-[12px] justify-center">
            {i === 0 ? <i className="size-3 rounded-full border border-[#96dbfa] bg-white" /> : <i className="size-[6px] rounded-full border border-[#e4e4e4] bg-white" />}
          </span>
        ))}
      </div>
      <div className="flex justify-between text-center text-[10px] leading-4 tracking-[1px] text-[#999]">
        {MARKS.map((m, i) => (
          <span key={m} className={i === 0 ? "mt-[2px] w-[54px] text-[#666]" : "mt-[2px] w-[54px]"}>{m}</span>
        ))}
      </div>
    </div>
  );
}

function ColorBar() {
  const ticks: [string, number][] = [["800", 284], ["600", 331], ["400", 377], ["200", 424], ["0", 470]];
  return (
    <svg width="58" height="260" viewBox="975 216 58 260" fontFamily="'DejaVu Sans', Verdana, sans-serif" fill="#2a3f5f">
      <defs>
        <linearGradient id="viridis" x1="0" y1="1" x2="0" y2="0">
          {["#440154", "#482878", "#3e4989", "#31688e", "#26828e", "#1f9e89", "#35b779", "#6ece58", "#b5de2b", "#fde725"].map((c, i) => (
            <stop key={c} offset={i / 9} stopColor={c} />
          ))}
        </linearGradient>
      </defs>
      <text x="975" y="237" fontSize="12" textLength="36">Value</text>
      <rect x="975" y="244" width="25" height="223" fill="url(#viridis)" />
      {ticks.map(([t, y]) => (
        <text key={t} x="1002.5" y={y} fontSize="10" textLength={t === "0" ? 6 : 20.5}>{t}</text>
      ))}
    </svg>
  );
}

export default function App() {
  return (
    <main className="h-[866px] w-[1033px] overflow-hidden bg-white font-['Nunito','Noto_Sans',sans-serif]">
      <div className="w-[1000px]">
        <h1 className="-mt-[23px] h-[39px] text-center text-[24px] leading-[34px] tracking-[2.2px] text-black">DASHBOARD</h1>
        <p className="h-[17px] text-center text-[10px] leading-[14px] tracking-[0.92px] text-[#333]">
          Das Dashboard stellt die ODA-Daten des BMZ nach Empfänger und Sektoren dar.
        </p>
        <Dropdown muted className="h-[31px]">Alle Partnerkategorien</Dropdown>
        <Dropdown className="mt-5 h-[30px]">Zusagen</Dropdown>
        <YearSlider />
      </div>
      <div className="mt-[52px] flex h-[260px] justify-between pl-[228px]">
        <WorldMap />
        <ColorBar />
      </div>
      <div className="w-[1000px]">
        <p className="mt-[65px] h-[34px] text-center text-[13px] leading-5 tracking-[0.95px] text-[#555]">Auswahl Empfänger für Filtern der Treemap:</p>
        <Dropdown muted className="h-[30px]">Alle Empfänger</Dropdown>
      </div>
      <div className="mt-[45px]">
        <Treemap />
      </div>
    </main>
  );
}
